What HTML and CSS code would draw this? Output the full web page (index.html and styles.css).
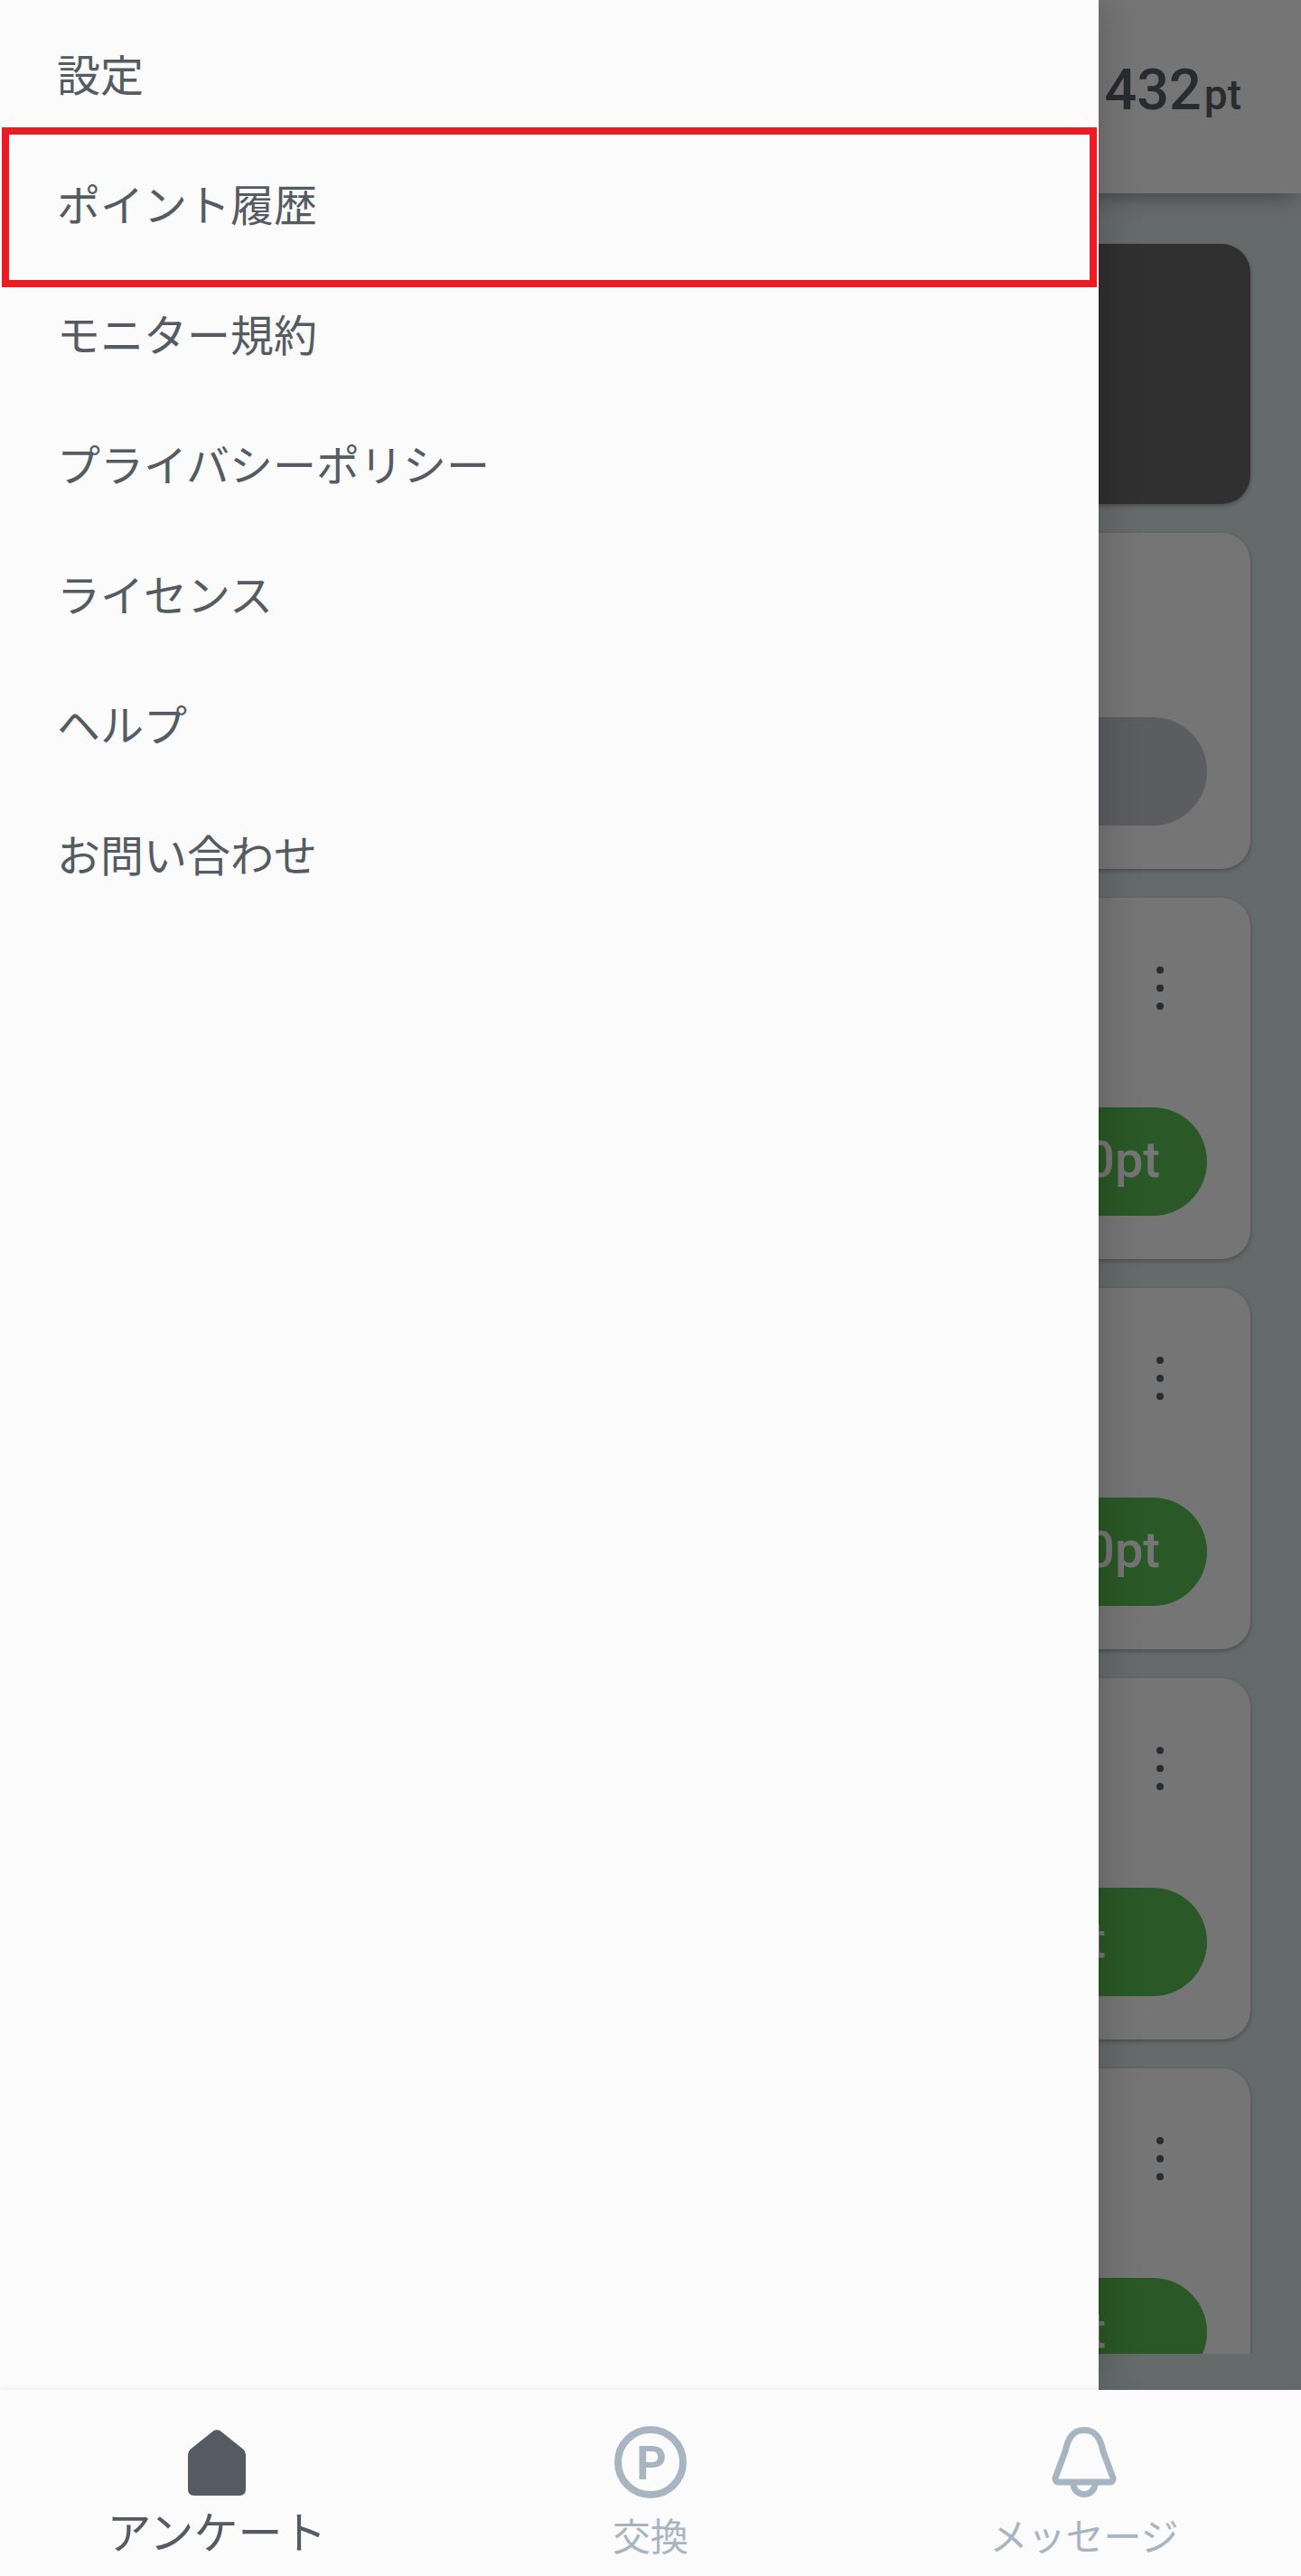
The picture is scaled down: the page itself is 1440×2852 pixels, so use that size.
FILE: index.html
```html
<!DOCTYPE html>
<html lang="ja">
<head>
<meta charset="utf-8">
<title>メニュー</title>
<link rel="stylesheet" href="styles.css">
</head>
<body>
<div class="app">
  <div class="stage">
    <header class="appbar">
      <span class="points">432</span><span class="points-unit">pt</span>
    </header>
    <main class="list">
      <section class="card card-dark"></section>
      <section class="card card-intro">
        <div class="pill pill-grey"></div>
      </section>
      <section class="card">
        <div class="dots"><i></i><i></i><i></i></div>
        <div class="pill pill-green">100pt</div>
      </section>
      <section class="card">
        <div class="dots"><i></i><i></i><i></i></div>
        <div class="pill pill-green">100pt</div>
      </section>
      <section class="card">
        <div class="dots"><i></i><i></i><i></i></div>
        <div class="pill pill-green pill-short">1pt</div>
      </section>
      <section class="card">
        <div class="dots"><i></i><i></i><i></i></div>
        <div class="pill pill-green pill-short">1pt</div>
      </section>
    </main>
    <div class="scrim"></div>
    <nav class="drawer">
      <a class="menu-item">設定</a>
      <a class="menu-item">ポイント履歴</a>
      <a class="menu-item">モニター規約</a>
      <a class="menu-item">プライバシーポリシー</a>
      <a class="menu-item">ライセンス</a>
      <a class="menu-item">ヘルプ</a>
      <a class="menu-item">お問い合わせ</a>
      <div class="highlight"></div>
    </nav>
  </div>
  <footer class="tabbar">
    <a class="tab tab-active">
      <span class="tab-icon">
        <svg width="64" height="73" viewBox="0 0 64 73"><path fill="#545b62" d="M28 1.4Q32 -1 36 1.4L61 21.5Q64 24 64 27.5V66Q64 73 57 73H7Q0 73 0 66V27.5Q0 24 3 21.5Z"/></svg>
      </span>
      <span class="tab-label">アンケート</span>
    </a>
    <a class="tab">
      <span class="tab-icon">
        <svg width="80" height="80" viewBox="0 0 80 80"><circle cx="40" cy="40" r="36" fill="none" stroke="#a7b5c3" stroke-width="8"/><text x="41" y="59" text-anchor="middle" class="p-mark">P</text></svg>
      </span>
      <span class="tab-label">交換</span>
    </a>
    <a class="tab">
      <span class="tab-icon">
        <svg width="72" height="78" viewBox="0 0 72 78" fill="none" stroke="#a7b5c3" stroke-width="7"><path d="M36 3.5C23 3.5 18 13 15 27L4 56.500Q3.500 61 8 61H64Q68.500 61 68 56.500L57 27C54 13 49 3.500 36 3.500Z"/><path d="M24 63C24 70 30 74.500 36 74.500C42 74.500 48 70 48 63"/></svg>
      </span>
      <span class="tab-label">メッセージ</span>
    </a>
  </footer>
</div>
</body>
</html>
```
FILE: styles.css
```css
* {
  box-sizing: border-box;
}

html,
body {
  margin: 0;
  padding: 0;
}

body {
  font-family: "Noto Sans CJK JP", "Noto Sans", sans-serif;
  color: #545b62;
}

.app {
  width: 1440px;
  height: 2852px;
  display: flex;
  flex-direction: column;
  overflow: hidden;
}

.stage {
  position: relative;
  flex: 1;
  min-height: 0;
  display: flex;
  flex-direction: column;
  background: #dce6e9;
}

.appbar {
  position: relative;
  z-index: 1;
  height: 214px;
  flex-shrink: 0;
  display: flex;
  justify-content: flex-end;
  align-items: baseline;
  padding: 63px 66px 0 0;
  background: #fff;
  box-shadow: 0 10px 22px -8px rgba(0, 0, 0, 0.4);
  font-family: Roboto, sans-serif;
  font-weight: 500;
  color: #556068;
}

.points {
  font-size: 63px;
  line-height: 74px;
  margin-right: 3px;
}

.points-unit {
  font-size: 46px;
  line-height: 74px;
}

.list {
  flex: 1;
  min-height: 0;
  margin-bottom: 40px;
  padding: 56px 56px 0;
  display: flex;
  flex-direction: column;
  gap: 32px;
  overflow: hidden;
}

.card {
  flex-shrink: 0;
  height: 400px;
  padding: 76px 48px 48px;
  display: flex;
  flex-direction: column;
  align-items: stretch;
  background: #fff;
  border-radius: 32px;
  box-shadow: 0 2px 5px rgba(0, 0, 0, 0.28);
}

.card-dark {
  height: 288px;
  padding: 0;
  background: #6a6a6a;
}

.card-intro {
  height: 372px;
  padding-top: 204px;
}

.dots {
  align-self: flex-end;
  margin-right: 48px;
  width: 8px;
  display: flex;
  flex-direction: column;
  gap: 12px;
}

.dots i {
  display: block;
  width: 8px;
  height: 8px;
  border-radius: 50%;
  background: #5a636b;
}

.pill {
  height: 120px;
  flex-shrink: 0;
  border-radius: 60px;
}

.pill-grey {
  background: #c8cad2;
}

.pill-green {
  margin-top: 108px;
  padding: 0 52px 4px 0;
  display: flex;
  justify-content: flex-end;
  align-items: center;
  background: #5cc054;
  color: #fff;
  font-family: Roboto, sans-serif;
  font-size: 56px;
  font-weight: 500;
}

.pill-short {
  padding-right: 112px;
}

.scrim {
  position: absolute;
  inset: 0;
  z-index: 2;
  background: rgba(0, 0, 0, 0.54);
}

.drawer {
  position: absolute;
  top: 0;
  bottom: 0;
  left: 0;
  z-index: 3;
  width: 1216px;
  padding-top: 8px;
  background: #fbfbfb;
  box-shadow: 6px 0 40px rgba(0, 0, 0, 0.18);
}

.menu-item {
  display: flex;
  align-items: center;
  height: 144px;
  padding-left: 63px;
  font-size: 48px;
  line-height: 1;
}

.highlight {
  position: absolute;
  top: 141px;
  left: 2px;
  width: 1212px;
  height: 177px;
  border: 8px solid #ed1c24;
}

.tabbar {
  position: relative;
  z-index: 4;
  height: 206px;
  flex-shrink: 0;
  display: grid;
  grid-template-columns: repeat(3, 1fr);
  padding-top: 40px;
  background: #fbfbfb;
  box-shadow: 0 -2px 8px rgba(0, 0, 0, 0.05);
}

.tab {
  display: flex;
  flex-direction: column;
  align-items: center;
  font-size: 42px;
  color: #a7b5c3;
}

.tab-icon {
  height: 80px;
  display: flex;
  align-items: center;
  justify-content: center;
}

.tab-label {
  margin-top: 12px;
  line-height: 56px;
}

.tab-active {
  font-size: 49px;
  color: #545b62;
}

.tab-active .tab-label {
  margin-top: 7px;
}

.p-mark {
  font-family: Roboto, sans-serif;
  font-size: 52px;
  font-weight: 700;
  fill: #a7b5c3;
}
```
